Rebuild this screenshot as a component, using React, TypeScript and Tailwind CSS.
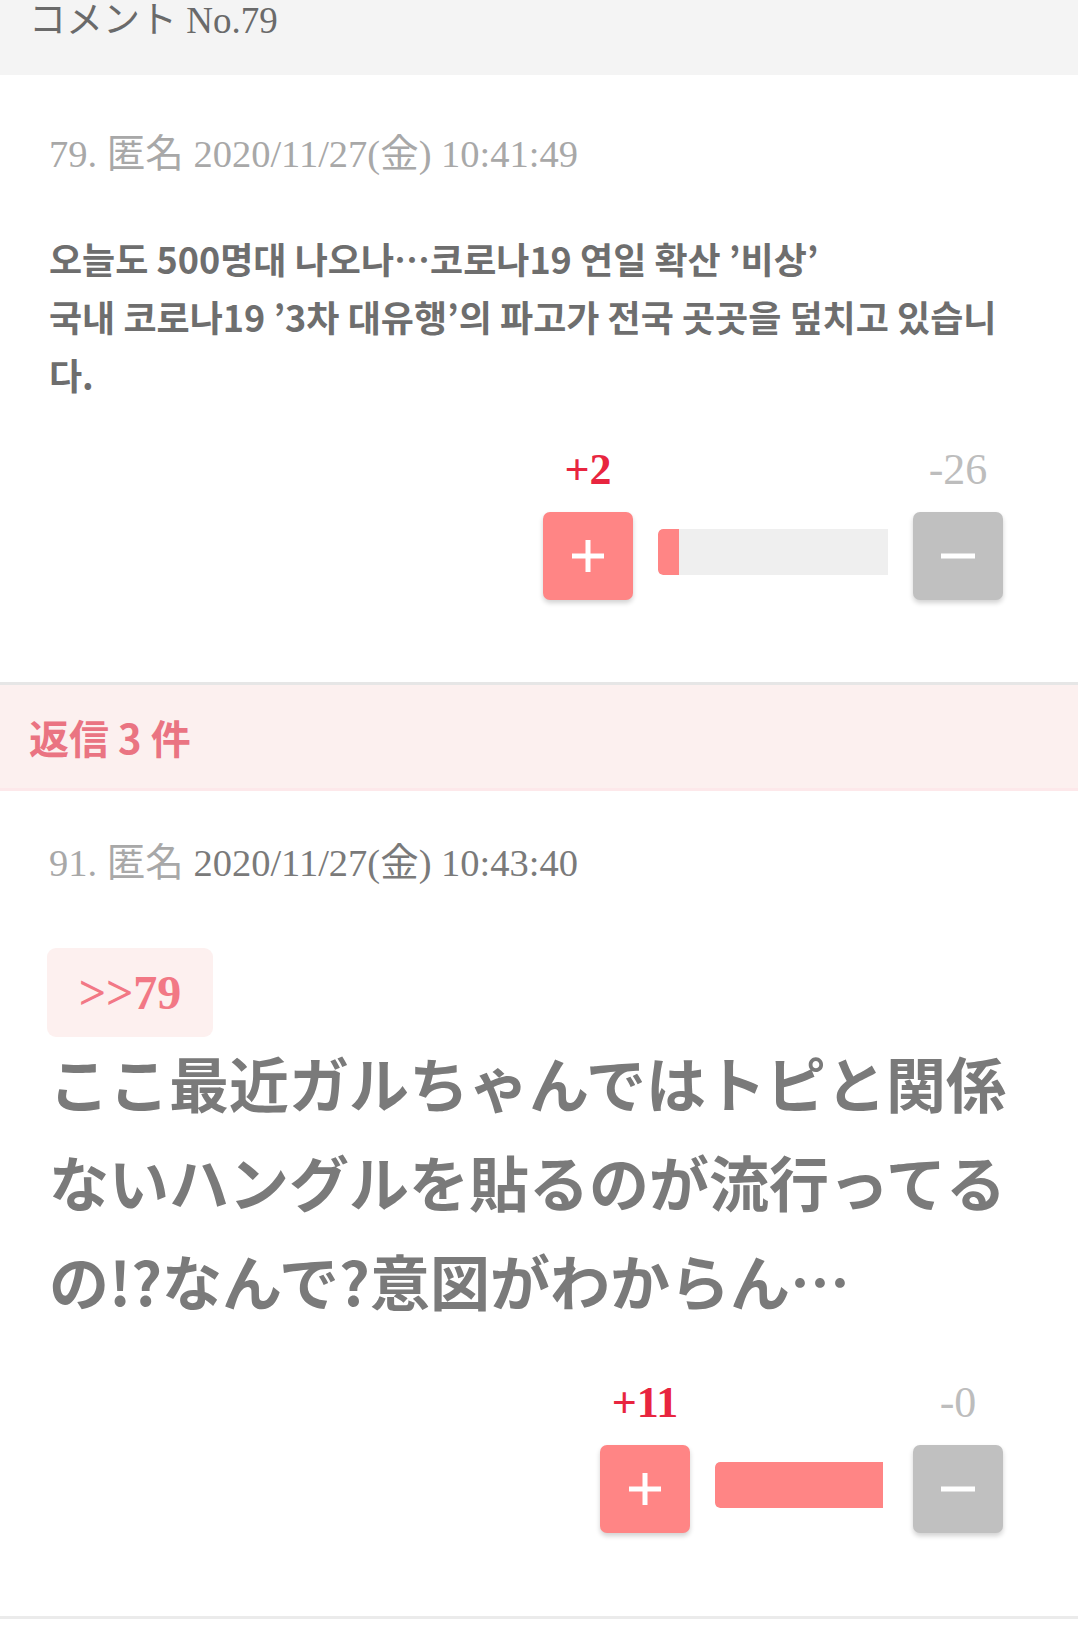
const serif = "font-['Liberation_Serif','Noto_Sans_CJK_JP',serif]";

function PlusIcon() {
  return (
    <svg width="38" height="38" viewBox="0 0 38 38">
      <path d="M19 3v32M3 19h32" stroke="#fff" strokeWidth="5" />
    </svg>
  );
}

function MinusIcon() {
  return (
    <svg width="38" height="38" viewBox="0 0 38 38">
      <path d="M2 19h34" stroke="#fff" strokeWidth="5" />
    </svg>
  );
}

function VoteBox({
  plus,
  minus,
  barWidth,
  fillWidth,
  barGap,
}: {
  plus: string;
  minus: string;
  barWidth: number;
  fillWidth: number;
  barGap: number;
}) {
  return (
    <div className="flex items-end justify-end pr-[75px]">
      <div className="flex flex-col items-center">
        <span className={`${serif} text-[44px] leading-[46px] font-bold text-[#e8253f] mb-[19px]`}>
          {plus}
        </span>
        <button className="flex h-[88px] w-[90px] items-center justify-center rounded-[7px] bg-[#ff8585] shadow-[0_3px_5px_rgba(0,0,0,0.18)]">
          <PlusIcon />
        </button>
      </div>
      <div
        className="mb-[25px] ml-[25px] h-[46px] overflow-hidden rounded-l-[5px] bg-[#efefef]"
        style={{ width: barWidth, marginRight: barGap }}
      >
        <div className="h-full rounded-l-[5px] bg-[#ff8585]" style={{ width: fillWidth }} />
      </div>
      <div className="flex flex-col items-center">
        <span className={`${serif} text-[44px] leading-[46px] text-[#bdbdbd] mb-[19px]`}>
          {minus}
        </span>
        <button className="flex h-[88px] w-[90px] items-center justify-center rounded-[7px] bg-[#c0c0c0] shadow-[0_3px_5px_rgba(0,0,0,0.18)]">
          <MinusIcon />
        </button>
      </div>
    </div>
  );
}

export default function App() {
  return (
    <div className="w-[1078px] bg-white">
      {/* page title bar, cut off at the top */}
      <div className="h-[75px] bg-[#f4f4f4] pl-[29px]">
        <span className={`${serif} block text-[37px] leading-[42px] text-[#6a6a6a]`}>
          コメント No.79
        </span>
      </div>

      {/* comment 79 */}
      <div className="pt-[56px] pb-[82px]">
        <div className={`${serif} pl-[49px] text-[38.5px] leading-[46px] text-[#a8a8a8]`}>
          79. 匿名 2020/11/27(金) 10:41:49
        </div>
        <p className="mt-[52px] pl-[49px] pr-[60px] font-['Noto_Sans_CJK_KR',sans-serif] text-[36px] font-bold leading-[58px] text-[#6e6e6e]">
          오늘도 500명대 나오나…코로나19 연일 확산 ’비상’
          <br />
          국내 코로나19 ’3차 대유행’의 파고가 전국 곳곳을 덮치고 있습니다.
        </p>
        <div className="mt-[44px]">
          <VoteBox plus="+2" minus="-26" barWidth={230} fillWidth={21} barGap={25} />
        </div>
      </div>

      <div className="h-[3px] bg-[#e6e6e6]" />

      {/* replies band */}
      <div className="flex h-[106px] items-center border-b-[3px] border-[#fde8ea] bg-[#fcf0ef] pl-[29px]">
        <span className="font-['Noto_Sans_CJK_JP',sans-serif] text-[40px] font-bold text-[#ea7482]">
          返信 3 件
        </span>
      </div>

      {/* reply 91 */}
      <div className="pt-[49px] pb-[83px]">
        <div className={`${serif} pl-[49px] text-[38.5px] leading-[46px] text-[#a8a8a8]`}>
          91. 匿名 <span className="text-[#7a7a7a]">2020/11/27(金) 10:43:40</span>
        </div>
        <div className="mt-[62px] pl-[47px]">
          <div className="inline-flex h-[89px] w-[166px] items-center justify-center rounded-[9px] bg-[#fdf0ef]">
            <span className={`${serif} text-[48px] font-bold text-[#f27885]`}>&gt;&gt;79</span>
          </div>
        </div>
        <p className="-mt-[5px] pl-[49px] pr-[49px] font-['Noto_Sans_CJK_JP',sans-serif] text-[60px] font-bold leading-[99px] text-[#7a7a7a]">
          ここ最近ガルちゃんではトピと関係ないハングルを貼るのが流行ってるの!?なんで?意図がわからん…
        </p>
        <div className="mt-[51px]">
          <VoteBox plus="+11" minus="-0" barWidth={168} fillWidth={168} barGap={30} />
        </div>
      </div>

      <div className="h-[3px] bg-[#ebebeb]" />
      <div className="h-[20px]" />
    </div>
  );
}
